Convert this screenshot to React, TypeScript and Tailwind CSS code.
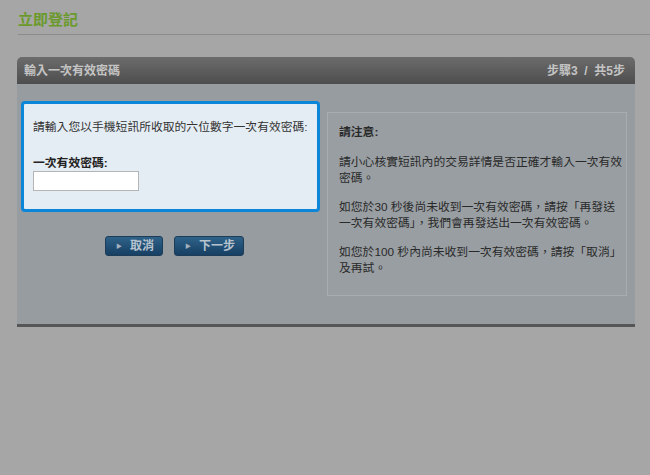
import React from 'react';

const font = { fontFamily: '"Liberation Sans", "Noto Sans CJK TC", sans-serif' };

const NavButton: React.FC<{ label: string; className?: string }> = ({ label, className }) => (
  <button
    className={
      'flex h-[20px] items-center rounded-[3px] border border-[#1c3c58] bg-gradient-to-b from-[#2f6289] to-[#163f63] pl-[10px] text-[12px] font-bold text-[#b7c3ce] ' +
      (className ?? '')
    }
  >
    <span className="mr-[8px] text-[6px] text-[#a3b0bc]">▶</span>
    {label}
  </button>
);

export default function App() {
  return (
    <div className="h-[475px] w-[650px] overflow-hidden bg-[#a6a6a6] text-[#2b2b2b]" style={font}>
      {/* title */}
      <div className="ml-[18px] border-b border-[#8b8b8b] pt-[10px] pb-[4px]">
        <h1 className="text-[15px] leading-[20px] font-bold text-[#6b9a2c]">立即登記</h1>
      </div>

      {/* panel */}
      <div className="mt-[22px] ml-[17px] w-[618px]">
        <div className="flex h-[27px] items-center justify-between rounded-t-[5px] bg-gradient-to-b from-[#6c6c6c] to-[#4e4e4e] px-[7px] text-[12px] font-bold text-[#c4c4c4]">
          <span>輸入一次有效密碼</span>
          <span className="pr-[3px]">步驟3&nbsp;&nbsp;/&nbsp;&nbsp;共5步</span>
        </div>
        <div className="flex h-[243px] items-start gap-[7px] border-b-[3px] border-[#565656] bg-[#979ca0] pt-[17px] pl-[4px]">
          {/* left column */}
          <div className="w-[299px]">
            <div className="h-[111px] rounded-[4px] border-[3px] border-[#0b86d8] bg-[#e5edf4] px-[9px] pt-[15px] text-[11.8px]">
              <p className="leading-[16px] whitespace-nowrap text-[#333]">請輸入您以手機短訊所收取的六位數字一次有效密碼:</p>
              <p className="mt-[20px] leading-[16px] font-bold text-[#222]">一次有效密碼:</p>
              <input className="block h-[20px] w-[106px] border border-[#b5b5b5] bg-white" />
            </div>
            <div className="mt-[24px] flex justify-center gap-[11px] pl-[8px]">
              <NavButton label="取消" className="w-[58px]" />
              <NavButton label="下一步" className="w-[70px]" />
            </div>
          </div>

          {/* notes */}
          <div className="mt-[11px] h-[184px] w-[300px] border border-[#a9adb0] bg-[#999ea2] pt-[11px] pr-[2px] pl-[11px] text-[11.8px] leading-[16px] text-[#2a2a2a]">
            <p className="font-bold">請注意:</p>
            <p className="mt-[14px]">請小心核實短訊內的交易詳情是否正確才輸入一次有效密碼。</p>
            <p className="mt-[13px]">如您於30 秒後尚未收到一次有效密碼，請按「再發送一次有效密碼」，我們會再發送出一次有效密碼。</p>
            <p className="mt-[13px]">如您於100 秒內尚未收到一次有效密碼，請按「取消」及再試。</p>
          </div>
        </div>
      </div>
    </div>
  );
}
